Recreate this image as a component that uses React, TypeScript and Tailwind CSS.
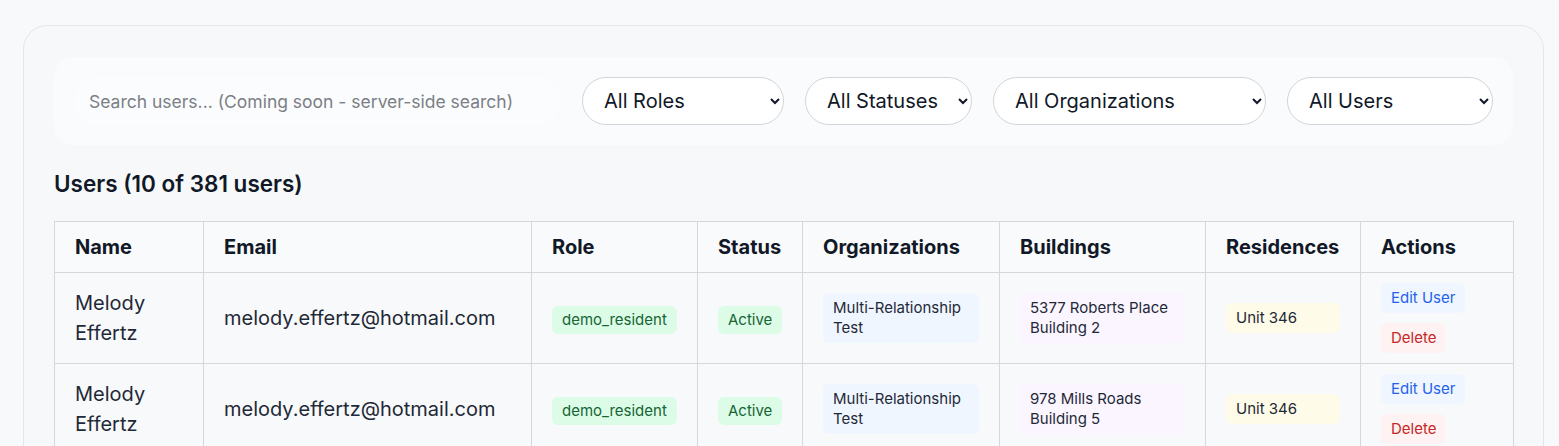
import React from "react";

type Row = {
  name: string;
  email: string;
  role: string;
  status: string;
  org: string;
  building: string;
  residence: string;
};

const rows: Row[] = [
  {
    name: "Melody Effertz",
    email: "melody.effertz@hotmail.com",
    role: "demo_resident",
    status: "Active",
    org: "Multi-Relationship Test",
    building: "5377 Roberts Place Building 2",
    residence: "Unit 346",
  },
  {
    name: "Melody Effertz",
    email: "melody.effertz@hotmail.com",
    role: "demo_resident",
    status: "Active",
    org: "Multi-Relationship Test",
    building: "978 Mills Roads Building 5",
    residence: "Unit 346",
  },
  {
    name: "Melody Effertz",
    email: "melody.effertz@hotmail.com",
    role: "demo_resident",
    status: "Active",
    org: "Multi-Relationship Test",
    building: "978 Mills Roads Building 5",
    residence: "Unit 346",
  },
];

const headers = [
  "Name",
  "Email",
  "Role",
  "Status",
  "Organizations",
  "Buildings",
  "Residences",
  "Actions",
];

function Select({ label, width }: { label: string; width: string }) {
  return (
    <select
      className={`h-12 ${width} shrink-0 rounded-full border border-[#d1d5db] bg-white pl-[17px] pr-[12px] text-[20px] text-[#111827] outline-none`}
      defaultValue={label}
    >
      <option>{label}</option>
    </select>
  );
}

const cell = "border border-[#d4d7dc] px-5 py-2.5 align-middle";
const badge = "block rounded-md px-2.5 py-[5px] text-[15px] leading-5";
const greenBadge =
  "mt-[3px] block rounded-md bg-[#dcfce7] px-2.5 py-1 text-[15px] leading-5 text-[#166534]";

export default function App() {
  return (
    <div className="min-h-screen overflow-hidden bg-[#f8f9fa] pl-[23px] pt-[25px] font-['Inter',sans-serif]">
      <div className="w-[1521px] rounded-[24px] border border-[#e3e6ea] bg-[#f7f8f9] px-[30px] pb-[30px] pt-[31px]">
        <div className="flex items-center gap-[21px] rounded-[20px] bg-[#fafbfc] p-5">
          <input
            className="h-12 w-[487px] shrink-0 rounded-full bg-[#fbfcfd] px-[15px] text-[17.5px] text-[#111827] outline-none placeholder:text-[#7b7f86]"
            placeholder="Search users... (Coming soon - server-side search)"
          />
          <Select label="All Roles" width="w-[202px]" />
          <Select label="All Statuses" width="w-[167px]" />
          <Select label="All Organizations" width="w-[273px]" />
          <Select label="All Users" width="w-[206px]" />
        </div>

        <h2 className="mb-[20px] mt-[21px] text-[22.5px] font-semibold leading-[35px] text-[#111827]">
          Users (10 of 381 users)
        </h2>

        <table className="w-[1459px] table-fixed border-collapse text-left text-[#1f2937]">
          <colgroup>
            <col className="w-[149px]" />
            <col className="w-[328px]" />
            <col className="w-[166px]" />
            <col className="w-[105px]" />
            <col className="w-[197px]" />
            <col className="w-[206px]" />
            <col className="w-[155px]" />
            <col className="w-[153px]" />
          </colgroup>
          <thead>
            <tr className="bg-[#f9fafb]">
              {headers.map((h) => (
                <th
                  key={h}
                  className="border border-[#d4d7dc] px-5 py-2.5 text-[20px] font-bold leading-[30px] text-[#111827]"
                >
                  {h}
                </th>
              ))}
            </tr>
          </thead>
          <tbody>
            {rows.map((r, i) => (
              <tr key={i} className="bg-[#f8f9fa]">
                <td className={`${cell} text-[20px] leading-[30px]`}>{r.name}</td>
                <td className={`${cell} text-[20px] leading-[30px]`}>{r.email}</td>
                <td className={cell}>
                  <span className={greenBadge}>{r.role}</span>
                </td>
                <td className={cell}>
                  <span className={greenBadge}>{r.status}</span>
                </td>
                <td className={cell}>
                  <span className={`${badge} bg-[#eff6ff] text-[#1f2937]`}>{r.org}</span>
                </td>
                <td className={cell}>
                  <span className={`${badge} bg-[#faf5ff] text-[#1f2937]`}>{r.building}</span>
                </td>
                <td className={cell}>
                  <span className={`${badge} bg-[#fefce8] text-[#1f2937]`}>{r.residence}</span>
                </td>
                <td className={cell}>
                  <div className="flex flex-col items-start gap-2.5">
                    <button className="rounded-md bg-[#eff6ff] px-2.5 py-[5px] text-[15px] leading-5 text-[#2563eb]">
                      Edit User
                    </button>
                    <button className="rounded-md bg-[#fef2f2] px-2.5 py-[5px] text-[15px] leading-5 text-[#c62828]">
                      Delete
                    </button>
                  </div>
                </td>
              </tr>
            ))}
          </tbody>
        </table>
      </div>
    </div>
  );
}
